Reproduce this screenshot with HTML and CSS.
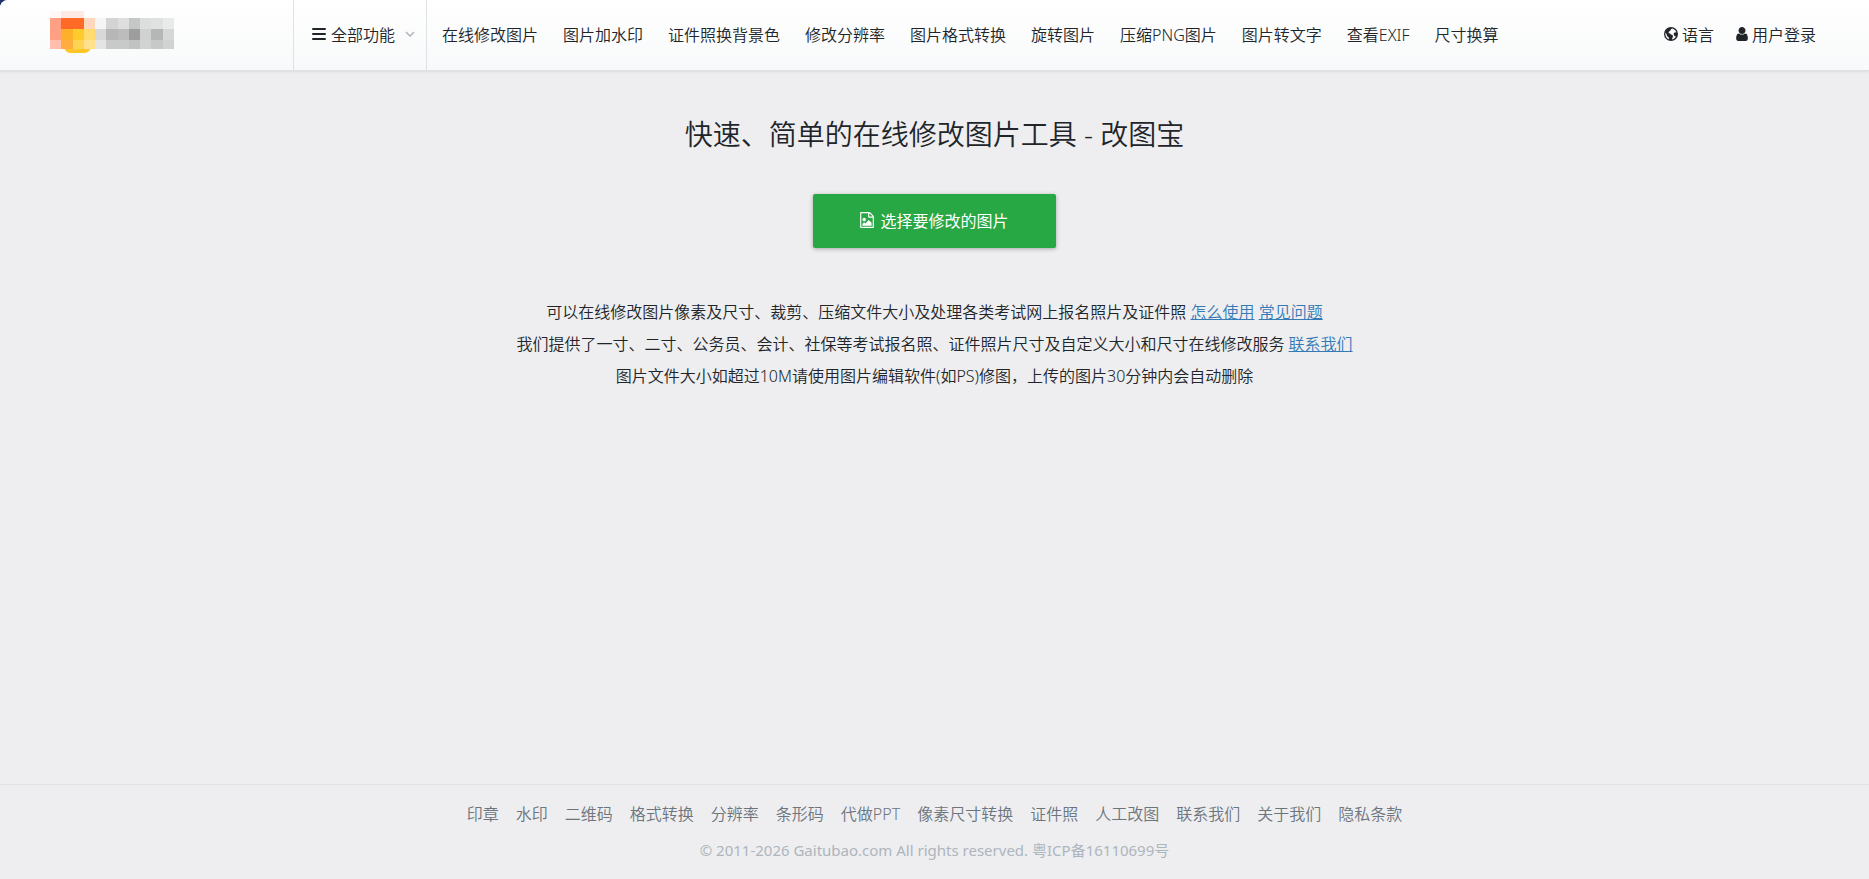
FILE: index.html
```html
<!DOCTYPE html>
<html lang="zh-CN">
<head>
    <meta charset="UTF-8">
    <meta name="viewport" content="width=device-width, initial-scale=1.0">
    <title>快速、简单的在线修改图片工具 - 改图宝</title>
    <link rel="stylesheet" href="styles.css">
</head>
<body>
<div class="page">

<header>
    <a class="logo" href="#" aria-label="改图宝">
        <svg width="126" height="44" viewBox="0 0 126 44" shape-rendering="crispEdges">
            <path fill="#fff8f6" d="M0 1h11v7H0z"/>
            <path fill="#ffe9e4" d="M11 1h23v7H11z"/>
            <path fill="#ffa085" d="M0 8h11v11H0z"/>
            <path fill="#ff6a26" d="M11 8h23v11H11z"/>
            <path fill="#ffd7bd" d="M34 8h11v11H34z"/>
            <path fill="#ff9f83" d="M0 19h11v11H0z"/>
            <path fill="#ffb02b" d="M11 19h12v11H11z"/>
            <path fill="#ffca2b" d="M23 19h11v11H23z"/>
            <path fill="#ffdb70" d="M34 19h11v11H34z"/>
            <path fill="#ffbeae" d="M0 30h11v9H0z"/>
            <path fill="#ffc629" shape-rendering="auto" d="M14 38h27q-2 5-7 5H21q-5 0-7-5z"/>
            <path fill="#ffad3f" d="M11 30h12v9H11z"/>
            <path fill="#ffd452" d="M23 30h11v9H23z"/>
            <path fill="#ffe08c" d="M34 30h11v9H34z"/>
            <path fill="#f5f5f5" d="M45 8h11v11H45z"/>
            <path fill="#d3d4d4" d="M56 8h12v11H56z"/>
            <path fill="#dedede" d="M68 8h11v11H68z"/>
            <path fill="#c5c6c6" d="M79 8h11v11H79z"/>
            <path fill="#dcdddd" d="M90 8h11v11H90z"/>
            <path fill="#e1e1e1" d="M101 8h12v11H101z"/>
            <path fill="#e9eaea" d="M113 8h11v11H113z"/>
            <path fill="#d8d8d9" d="M45 19h11v11H45z"/>
            <path fill="#b6b7b7" d="M56 19h12v11H56z"/>
            <path fill="#bcbcbc" d="M68 19h11v11H68z"/>
            <path fill="#9d9d9d" d="M79 19h11v11H79z"/>
            <path fill="#d0d1d1" d="M90 19h11v11H90z"/>
            <path fill="#b5b6b6" d="M101 19h12v11H101z"/>
            <path fill="#d6d7d7" d="M113 19h11v11H113z"/>
            <path fill="#e4e4e5" d="M45 30h11v9H45z"/>
            <path fill="#c8c9c9" d="M56 30h23v9H56z"/>
            <path fill="#c1c2c2" d="M79 30h11v9H79z"/>
            <path fill="#d1d2d2" d="M90 30h11v9H90z"/>
            <path fill="#c7c8c8" d="M101 30h12v9H101z"/>
            <path fill="#d1d2d2" d="M113 30h11v9H113z"/>
        </svg>
    </a>
    <button class="all-menu" type="button">
        <svg class="icon" width="14" height="14" viewBox="0 0 14 14"><path d="M0 2q0-1 1-1h12q1 0 1 1t-1 1H1Q0 3 0 2zm0 5q0-1 1-1h12q1 0 1 1t-1 1H1Q0 8 0 7zm0 5q0-1 1-1h12q1 0 1 1t-1 1H1q-1 0-1-1z"/></svg>
        <span>全部功能</span>
        <svg class="chevron" width="10" height="6" viewBox="0 0 10 6"><path d="M1 1l4 4 4-4"/></svg>
    </button>
    <nav class="main-nav">
        <a href="#">在线修改图片</a>
        <a href="#">图片加水印</a>
        <a href="#">证件照换背景色</a>
        <a href="#">修改分辨率</a>
        <a href="#">图片格式转换</a>
        <a href="#">旋转图片</a>
        <a href="#">压缩PNG图片</a>
        <a href="#">图片转文字</a>
        <a href="#">查看EXIF</a>
        <a href="#">尺寸换算</a>
    </nav>
    <nav class="user-nav">
        <a href="#">
            <svg class="icon" width="14" height="14" viewBox="0 0 14 14"><path fill-rule="evenodd" d="M7 0a7 7 0 1 1 0 14A7 7 0 0 1 7 0zM8.500 1.500L7 2l-.5 1.500L5 4.500 4.500 6l1.500.5 1 1 1.500.5L9 9.500 8 12l.5.500q2.500-.8 3.500-3L10.500 9 9.500 7l1-1.500 2-.3q-1-2.700-4-3.700zM1.500 5.500Q.8 9.500 4 12l1 .3-.3-1.800L3 9 2.500 7z"/></svg>
            <span>语言</span>
        </a>
        <a href="#">
            <svg class="icon" width="12" height="14" viewBox="256 128 1280 1536"><path d="M1536 1399q0 109-62.500 187t-150.500 78h-854q-88 0-150.500-78t-62.500-187q0-85 8.500-160.500t31.500-152 58.500-131 94-89 134.500-34.500q131 128 313 128t313-128q76 0 134.500 34.500t94 89 58.500 131 31.500 152 8.500 160.500zm-256-887q0 159-112.500 271.500t-271.500 112.500-271.500-112.500-112.500-271.500 112.500-271.500 271.500-112.500 271.500 112.500 112.500 271.500z"/></svg>
            <span>用户登录</span>
        </a>
    </nav>
</header>

<main>
    <h1>快速、简单的在线修改图片工具 - 改图宝</h1>
    <button class="btn-upload" type="button">
        <svg class="icon" width="14" height="16" viewBox="128 0 1536 1792"><path d="M1596 380q28 28 48 76t20 88v1152q0 40-28 68t-68 28h-1344q-40 0-68-28t-28-68v-1600q0-40 28-68t68-28h896q40 0 88 20t76 48zm-444-244v376h376q-10-29-22-41l-313-313q-12-12-41-22zm384 1528v-1024h-416q-40 0-68-28t-28-68v-416h-768v1536h1280zm-128-448v320h-1024v-192l192-192 128 128 384-384zm-832-192q-80 0-136-56t-56-136 56-136 136-56 136 56 56 136-56 136-136 56z"/></svg>
        <span>选择要修改的图片</span>
    </button>
    <div class="intro">
        <p>可以在线修改图片像素及尺寸、裁剪、压缩文件大小及处理各类考试网上报名照片及证件照 <a href="#">怎么使用</a> <a href="#">常见问题</a></p>
        <p>我们提供了一寸、二寸、公务员、会计、社保等考试报名照、证件照片尺寸及自定义大小和尺寸在线修改服务 <a href="#">联系我们</a></p>
        <p>图片文件大小如超过10M请使用图片编辑软件(如PS)修图，上传的图片30分钟内会自动删除</p>
    </div>
</main>

<footer>
    <nav class="footer-nav">
        <a href="#">印章</a>
        <a href="#">水印</a>
        <a href="#">二维码</a>
        <a href="#">格式转换</a>
        <a href="#">分辨率</a>
        <a href="#">条形码</a>
        <a href="#">代做PPT</a>
        <a href="#">像素尺寸转换</a>
        <a href="#">证件照</a>
        <a href="#">人工改图</a>
        <a href="#">联系我们</a>
        <a href="#">关于我们</a>
        <a href="#">隐私条款</a>
    </nav>
    <p class="copyright">© 2011-2026 Gaitubao.com All rights reserved. <a href="#">粤ICP备16110699号</a></p>
</footer>

</div>
</body>
</html>
```
FILE: styles.css
```css
* {
    box-sizing: border-box;
}
html {
    background-color: #1f2f6b;
}
body {
    margin: 0;
    font-family: 'Noto Sans', 'Noto Sans CJK SC', sans-serif;
    font-size: 16px;
    font-weight: 350;
    color: #212529;
}
a {
    color: inherit;
    text-decoration: none;
}
p {
    margin: 0;
}
button {
    border: 0;
    font: inherit;
    color: inherit;
    cursor: pointer;
}
.icon {
    flex: none;
    fill: currentColor;
}
.page {
    display: flex;
    flex-direction: column;
    min-height: 100vh;
    background-color: #eeeef0;
    border-top-left-radius: 8px;
    overflow: hidden;
}
header {
    display: flex;
    height: 71px;
    background-image: linear-gradient(#fff, #f8f9fa);
    border-bottom: 1px solid #dee2e6;
    box-shadow: 0 1px 3px rgba(0, 0, 0, 0.08);
    white-space: nowrap;
}
.logo {
    width: 293px;
    padding: 10px 0 0 50px;
}
.all-menu {
    display: flex;
    align-items: center;
    gap: 5px;
    width: 134px;
    padding: 0 11px 2px 18px;
    background: none;
    border-left: 1px solid #dee2e6;
    border-right: 1px solid #dee2e6;
}
.chevron {
    margin-left: auto;
    fill: none;
    stroke: #adb5bd;
    stroke-width: 1.5;
}
.main-nav {
    display: flex;
    align-items: center;
    gap: 25px;
    padding: 0 0 2px 15px;
}
.user-nav {
    display: flex;
    align-items: center;
    gap: 22px;
    margin-left: auto;
    padding: 0 53px 2px 0;
}
.user-nav a {
    display: flex;
    align-items: center;
    gap: 4px;
}
main {
    flex: 1;
    display: flex;
    flex-direction: column;
    align-items: center;
    padding-top: 43px;
    text-align: center;
}
h1 {
    margin: 0 0 40px;
    font-size: 28px;
    line-height: 40px;
    font-weight: 350;
}
.btn-upload {
    display: flex;
    align-items: center;
    gap: 6px;
    height: 54px;
    padding: 0 47px 2px;
    color: #fff;
    font-weight: 400;
    background-color: #28a745;
    border-radius: 2px;
    box-shadow: 0 1px 4px rgba(0, 0, 0, 0.3);
}
.intro {
    margin-top: 48px;
    line-height: 32px;
}
.intro a {
    color: #337ab7;
    text-decoration: underline;
}
footer {
    padding: 15px 0;
    border-top: 1px solid #dee2e6;
    text-align: center;
}
.footer-nav {
    display: flex;
    justify-content: center;
    gap: 17px;
    line-height: 28px;
    color: #6c757d;
}
.copyright {
    margin-top: 8px;
    font-size: 15px;
    font-weight: 400;
    line-height: 28px;
    color: #adb5bd;
}
```
